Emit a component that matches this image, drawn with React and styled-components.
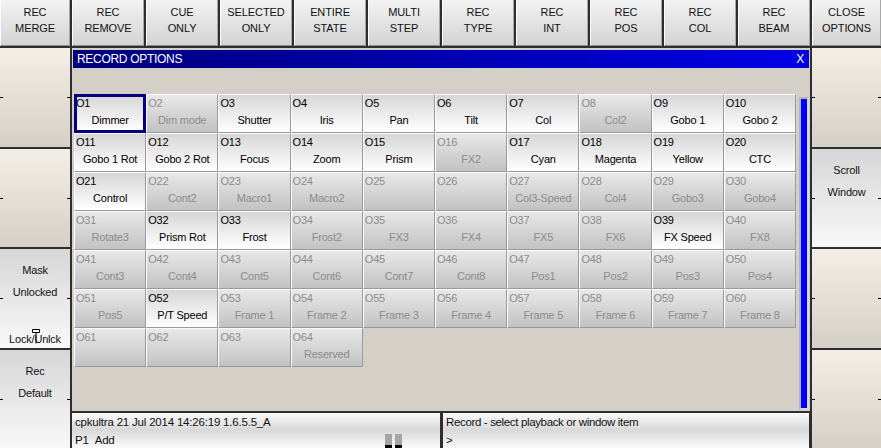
import React from "react";
import styled, { createGlobalStyle, css } from "styled-components";

const Global = createGlobalStyle`
  html, body { margin: 0; padding: 0; background: #303030; }
  body { font-family: "Liberation Sans", Arial, sans-serif; }
  * { box-sizing: border-box; }
`;

const Screen = styled.div`
  width: 881px;
  height: 448px;
  display: grid;
  grid-template-columns: 70px 738px 69px;
  grid-template-rows: 46px 400px;
  column-gap: 2px;
  row-gap: 2px;
  background: #2e2e2e;
  overflow: hidden;
  font-family: "Liberation Sans", Arial, sans-serif;
`;

const TopBar = styled.div`
  grid-column: 1 / -1;
  display: grid;
  grid-template-columns: 70px repeat(10, 1fr) 69px;
  column-gap: 2px;
`;

const TopButton = styled.div`
  display: flex;
  flex-direction: column;
  align-items: center;
  justify-content: center;
  padding-bottom: 5px;
  background: linear-gradient(to bottom, #f3f3f3, #d3d3d3);
  border-left: 1px solid #fafafa;
  border-right: 1px solid #a8a8a8;
  border-bottom: 1px solid #8a8a8a;
  color: #111;
  font-family: "Liberation Sans Narrow", "Liberation Sans", Arial, sans-serif;
  font-size: 11px;
  line-height: 16px;
  text-align: center;
  letter-spacing: -0.1px;
`;

const SideColumn = styled.div`
  display: flex;
  flex-direction: column;
  gap: 2px;
`;

const SidePanel = styled.div`
  position: relative;
  flex: 1;
  display: flex;
  flex-direction: column;
  align-items: center;
  padding: 10px 0 1px;
  font-size: 11px;
  line-height: 22px;
  color: #111;
  letter-spacing: -0.2px;
  background: ${(p) =>
    p.$light
      ? "linear-gradient(to bottom, #d6d6d6, #f8f8f8)"
      : "linear-gradient(to bottom, #f3efe6, #d4d0c8)"};
  &::before, &::after {
    content: "";
    position: absolute;
    top: 50%;
    width: 3px;
    height: 1px;
    background: #000;
  }
  &::before { left: 0; }
  &::after { right: 0; }
`;

const BottomLine = styled.div`
  position: relative;
  margin-top: auto;
  line-height: 16px;
`;

const Cursor = styled.svg`
  position: absolute;
  left: 22px;
  top: -3px;
`;

const Center = styled.div`
  display: flex;
  flex-direction: column;
  gap: 2px;
  min-height: 0;
`;

const Window = styled.div`
  flex: 1;
  display: flex;
  flex-direction: column;
  padding: 2px 1px 0 1px;
  background: #d4d0c8;
  min-height: 0;
`;

const TitleBar = styled.div`
  height: 18px;
  display: flex;
  align-items: center;
  justify-content: space-between;
  padding: 0 5px 0 4px;
  background: linear-gradient(to right, #00007a, #0000e6);
  color: #fff;
  font-size: 12px;
  letter-spacing: -0.3px;
`;

const Body = styled.div`
  flex: 1;
  display: flex;
  gap: 3px;
  padding: 26px 0 0 1px;
  position: relative;
`;

const Grid = styled.div`
  width: 722px;
  display: grid;
  grid-template-columns: repeat(10, 1fr);
  grid-auto-rows: 39px;
  align-content: start;
`;

const Cell = styled.div`
  display: flex;
  flex-direction: column;
  border: 1px solid;
  border-color: #fbfbfb #9a9a9a #9a9a9a #fbfbfb;
  padding: 2px 0 0 1px;
  font-size: 11px;
  line-height: 13px;
  letter-spacing: -0.2px;
  overflow: hidden;
  white-space: nowrap;
  ${(p) =>
    p.$active
      ? css`
          color: #000;
          background: linear-gradient(to bottom, #d6d6d6, #ffffff);
        `
      : css`
          color: #8c8c8c;
          background: linear-gradient(to bottom, #e8e8e8, #c2c2c2);
        `}
  ${(p) =>
    p.$selected &&
    css`
      border-color: #000080;
      box-shadow: inset 0 0 0 2px #000080;
    `}
`;

const CellName = styled.div`
  margin-top: 4px;
  text-align: center;
  padding-right: 1px;
`;

const ScrollTrack = styled.div`
  width: 10px;
  margin: 3px 0 1px;
  border: 2px solid #b4b4b4;
  border-right-color: #d8d8d8;
  border-bottom-color: #d8d8d8;
  background: #0000ff;
`;

const Status = styled.div`
  height: 35px;
  display: flex;
  gap: 3px;
  padding-right: 1px;
`;

const StatusBox = styled.div`
  ${(p) => (p.$w ? `width: ${p.$w}px;` : "flex: 1;")}
  display: flex;
  flex-direction: column;
  padding: 1px 0 0 3px;
  background: linear-gradient(to bottom, #fafafa 0%, #d8d8d8 48%, #fbfbfb 100%);
  font-size: 11.5px;
  line-height: 16px;
  color: #111;
  letter-spacing: ${(p) => (p.$tight ? "-0.35px" : "-0.2px")};
`;

const StatusLine = styled.div`
  display: flex;
  justify-content: space-between;
  align-items: flex-end;
  margin-top: 2px;
  padding-right: 38px;
  flex: 1;
`;

const Meter = styled.div`
  display: flex;
  gap: 3px;
  align-self: flex-end;
`;

const MeterBar = styled.div`
  width: 7px;
  height: 14px;
  background: linear-gradient(to bottom, #a4a4a4 0, #a4a4a4 11px, #000 11px);
`;

const names = [
  "Dimmer", "Dim mode", "Shutter", "Iris", "Pan", "Tilt", "Col", "Col2", "Gobo 1", "Gobo 2",
  "Gobo 1 Rot", "Gobo 2 Rot", "Focus", "Zoom", "Prism", "FX2", "Cyan", "Magenta", "Yellow", "CTC",
  "Control", "Cont2", "Macro1", "Macro2", "", "", "Col3-Speed", "Col4", "Gobo3", "Gobo4",
  "Rotate3", "Prism Rot", "Frost", "Frost2", "FX3", "FX4", "FX5", "FX6", "FX Speed", "FX8",
  "Cont3", "Cont4", "Cont5", "Cont6", "Cont7", "Cont8", "Pos1", "Pos2", "Pos3", "Pos4",
  "Pos5", "P/T Speed", "Frame 1", "Frame 2", "Frame 3", "Frame 4", "Frame 5", "Frame 6", "Frame 7", "Frame 8",
  "", "", "", "Reserved",
];
const active = new Set([1, 3, 4, 5, 6, 7, 9, 10, 11, 12, 13, 14, 15, 17, 18, 19, 20, 21, 32, 33, 39, 52]);

const topButtons = [
  ["REC", "MERGE"], ["REC", "REMOVE"], ["CUE", "ONLY"], ["SELECTED", "ONLY"],
  ["ENTIRE", "STATE"], ["MULTI", "STEP"], ["REC", "TYPE"], ["REC", "INT"],
  ["REC", "POS"], ["REC", "COL"], ["REC", "BEAM"], ["CLOSE", "OPTIONS"],
];

export default function App() {
  return (
    <>
      <Global />
      <Screen>
        <TopBar>
          {topButtons.map(([a, b], i) => (
            <TopButton key={i}>
              <span>{a}</span>
              <span>{b}</span>
            </TopButton>
          ))}
        </TopBar>

        <SideColumn>
          <SidePanel />
          <SidePanel />
          <SidePanel $light>
            <span>Mask</span>
            <span>Unlocked</span>
            <BottomLine>
              Lock/Unlck
              <Cursor width="10" height="16" viewBox="0 0 10 16">
                <path d="M1.5 1.5h7v3h-7z" fill="#fff" stroke="#000" strokeWidth="1" />
                <path d="M5 4.5v11" stroke="#000" strokeWidth="1" />
              </Cursor>
            </BottomLine>
          </SidePanel>
          <SidePanel $light>
            <span>Rec</span>
            <span>Default</span>
          </SidePanel>
        </SideColumn>

        <Center>
          <Window>
            <TitleBar>
              <span>RECORD OPTIONS</span>
              <span>X</span>
            </TitleBar>
            <Body>
              <Grid>
                {names.map((n, i) => {
                  const idx = i + 1;
                  return (
                    <Cell key={idx} $active={active.has(idx)} $selected={idx === 1}>
                      <span>O{idx}</span>
                      <CellName>{n || "\u00a0"}</CellName>
                    </Cell>
                  );
                })}
              </Grid>
              <ScrollTrack />
            </Body>
          </Window>
          <Status>
            <StatusBox $w={368}>
              <span>cpkultra 21 Jul 2014 14:26:19 1.6.5.5_A</span>
              <StatusLine>
                <span>P1&nbsp;&nbsp;Add</span>
                <Meter>
                  <MeterBar />
                  <MeterBar />
                </Meter>
              </StatusLine>
            </StatusBox>
            <StatusBox $tight>
              <span>Record - select playback or window item</span>
              <StatusLine>
                <span>&gt;</span>
              </StatusLine>
            </StatusBox>
          </Status>
        </Center>

        <SideColumn>
          <SidePanel />
          <SidePanel $light>
            <span>Scroll</span>
            <span>Window</span>
          </SidePanel>
          <SidePanel />
          <SidePanel />
        </SideColumn>
      </Screen>
    </>
  );
}
